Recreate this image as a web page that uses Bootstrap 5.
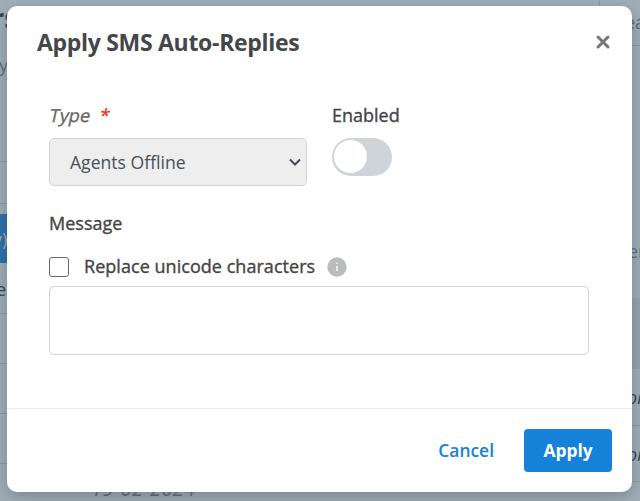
<!DOCTYPE html>
<html lang="en">
<head>
<meta charset="utf-8">
<meta name="viewport" content="width=device-width, initial-scale=1">
<title>Apply SMS Auto-Replies</title>
<link href="https://cdn.jsdelivr.net/npm/bootstrap@5.3.0/dist/css/bootstrap.min.css" rel="stylesheet">
<style>
html,body{height:100%}
body{font-family:"Open Sans","Noto Sans",sans-serif;font-size:18px;line-height:24px;color:#444;background:#a2afb8;overflow:hidden}
/* dimmed page behind the dialog */
.behind{inset:0;overflow:hidden}
.behind span,.behind i{position:absolute;white-space:nowrap;color:#5f6d78}
.behind b{position:absolute;background:#8e9ba6}
.dialog{margin:6px 8px 0 7px;height:486px;border-radius:10px;background:#fff;box-shadow:0 5px 18px rgba(40,55,70,.35)}
.dlg-head{height:90px;padding:20px 21px 0 30px}
.dlg-title{font-size:23px;font-weight:700;line-height:32px;letter-spacing:-.3px;color:#444648}
.dlg-close{width:16px;height:16px;margin-top:8px}
.dlg-body{height:312px;padding:7px 43px 0 42px}
.lbl{color:#444;-webkit-text-stroke:.35px currentColor}
.type-col{width:258px;margin-right:25px}
.type-lbl{color:#666;padding-left:1px}
.slant{display:inline-block;transform:skewX(-12deg);letter-spacing:.2px}
.req{color:#e0391b;margin-left:9px}
.pick{height:48px;margin-top:11px;border:1px solid #ced4da;border-radius:5px;background:#eee;color:#495057;padding:0 4px 0 20px}
.pick span{font-size:17.6px}
.toggle{width:60px;height:38px;margin-top:11px;border-radius:19px;background:#ced4da;padding:2px}
.knob{width:33px;height:33px;border-radius:50%;background:#fff}
.msg-lbl{margin-top:25px}
.check-row{margin-top:19px}
.tick{width:20px;height:20px;border:1px solid #666;border-radius:3px;margin:1px 15px -1px 0}
.check-lbl{letter-spacing:.04px}
.info{margin:1px 0 -1px 11.5px}
.msg-box{height:69px;border:1px solid #ced4da;border-radius:5px;resize:none;display:block;width:540px;margin-top:8px}
.dlg-foot{height:84px;border-top:1px solid #e9ecef;padding:0 20px}
.cancel,.apply{font-size:17.4px;border:0;line-height:24px}
.cancel{color:#1681d8;font-weight:600;padding:0 0 2px;margin-right:30px}
.apply{width:88px;height:43px;background:#1681d8;color:#fff;font-weight:700;border-radius:4px;padding:0 0 2px}
</style>
</head>
<body>
<div class="behind position-absolute">
<span style="left:-8px;top:6px;font-size:27px;font-weight:700;color:#38444e">rs</span>
<span style="left:-1px;top:53px">y</span>
<b style="left:0;top:161px;width:8px;height:1px"></b>
<b style="left:0;top:203px;width:8px;height:1px"></b>
<b style="left:0;top:214px;width:8px;height:49px;background:#2d71a9"></b>
<span style="left:-7px;top:227px;color:#a2afb8">y)</span>
<span style="left:-4px;top:277px;color:#38444e">e</span>
<b style="left:0;top:313px;width:8px;height:1px"></b>
<b style="left:0;top:363px;width:8px;height:1px"></b>
<b style="left:0;top:413px;width:8px;height:1px"></b>
<b style="left:0;top:463px;width:8px;height:1px"></b>
<i style="left:91px;top:477px;font-size:20px;letter-spacing:.4px">19-02-2024</i>
<b style="left:599px;top:0;width:1px;height:8px"></b>
<b style="left:630px;top:45px;width:10px;height:1px"></b>
<span style="left:625px;top:10px">ea</span>
<span style="left:628px;top:239px">er</span>
<b style="left:630px;top:298px;width:10px;height:71px;background:#98a5af"></b>
<i style="left:627px;top:385px;color:#38444e">or</i>
<b style="left:630px;top:425px;width:10px;height:1px"></b>
<i style="left:627px;top:442px;color:#38444e">or</i>
<b style="left:630px;top:481px;width:10px;height:1px"></b>
</div>
<main class="dialog position-relative">
<header class="dlg-head d-flex justify-content-between align-items-start">
<h1 class="dlg-title m-0">Apply SMS Auto-Replies</h1>
<svg class="dlg-close" viewBox="0 0 16 16" role="img" aria-label="Close"><path d="M3 3l10 10M13 3L3 13" stroke="#777" stroke-width="3" stroke-linecap="round"/></svg>
</header>
<section class="dlg-body">
<div class="d-flex">
<div class="type-col"><div class="lbl type-lbl"><span class="slant">Type</span><span class="slant req">*</span></div>
<div class="pick d-flex align-items-center justify-content-between"><span>Agents Offline</span><svg width="14" height="12" viewBox="0 0 14 12"><path d="M2 3.5l5 5 5-5" fill="none" stroke="#444b52" stroke-width="2"/></svg></div></div>
<div><div class="lbl">Enabled</div><div class="toggle"><div class="knob"></div></div></div>
</div>
<div class="lbl msg-lbl">Message</div>
<div class="check-row d-flex align-items-center"><span class="tick"></span><span class="lbl check-lbl">Replace unicode characters</span>
<svg class="info" width="20" height="20" viewBox="0 0 20 20"><circle cx="10" cy="10" r="9.7" fill="#bbbcbd"/><path d="M10 9v5M10 5.5v1.5" stroke="#fff" stroke-opacity=".85" stroke-width="1.5"/></svg></div>
<textarea class="msg-box" aria-label="Message"></textarea>
</section>
<footer class="dlg-foot d-flex align-items-center justify-content-end">
<button class="btn cancel">Cancel</button><button class="btn apply">Apply</button>
</footer>
</main>
<script src="https://cdn.jsdelivr.net/npm/bootstrap@5.3.0/dist/js/bootstrap.bundle.min.js"></script>
</body>
</html>
